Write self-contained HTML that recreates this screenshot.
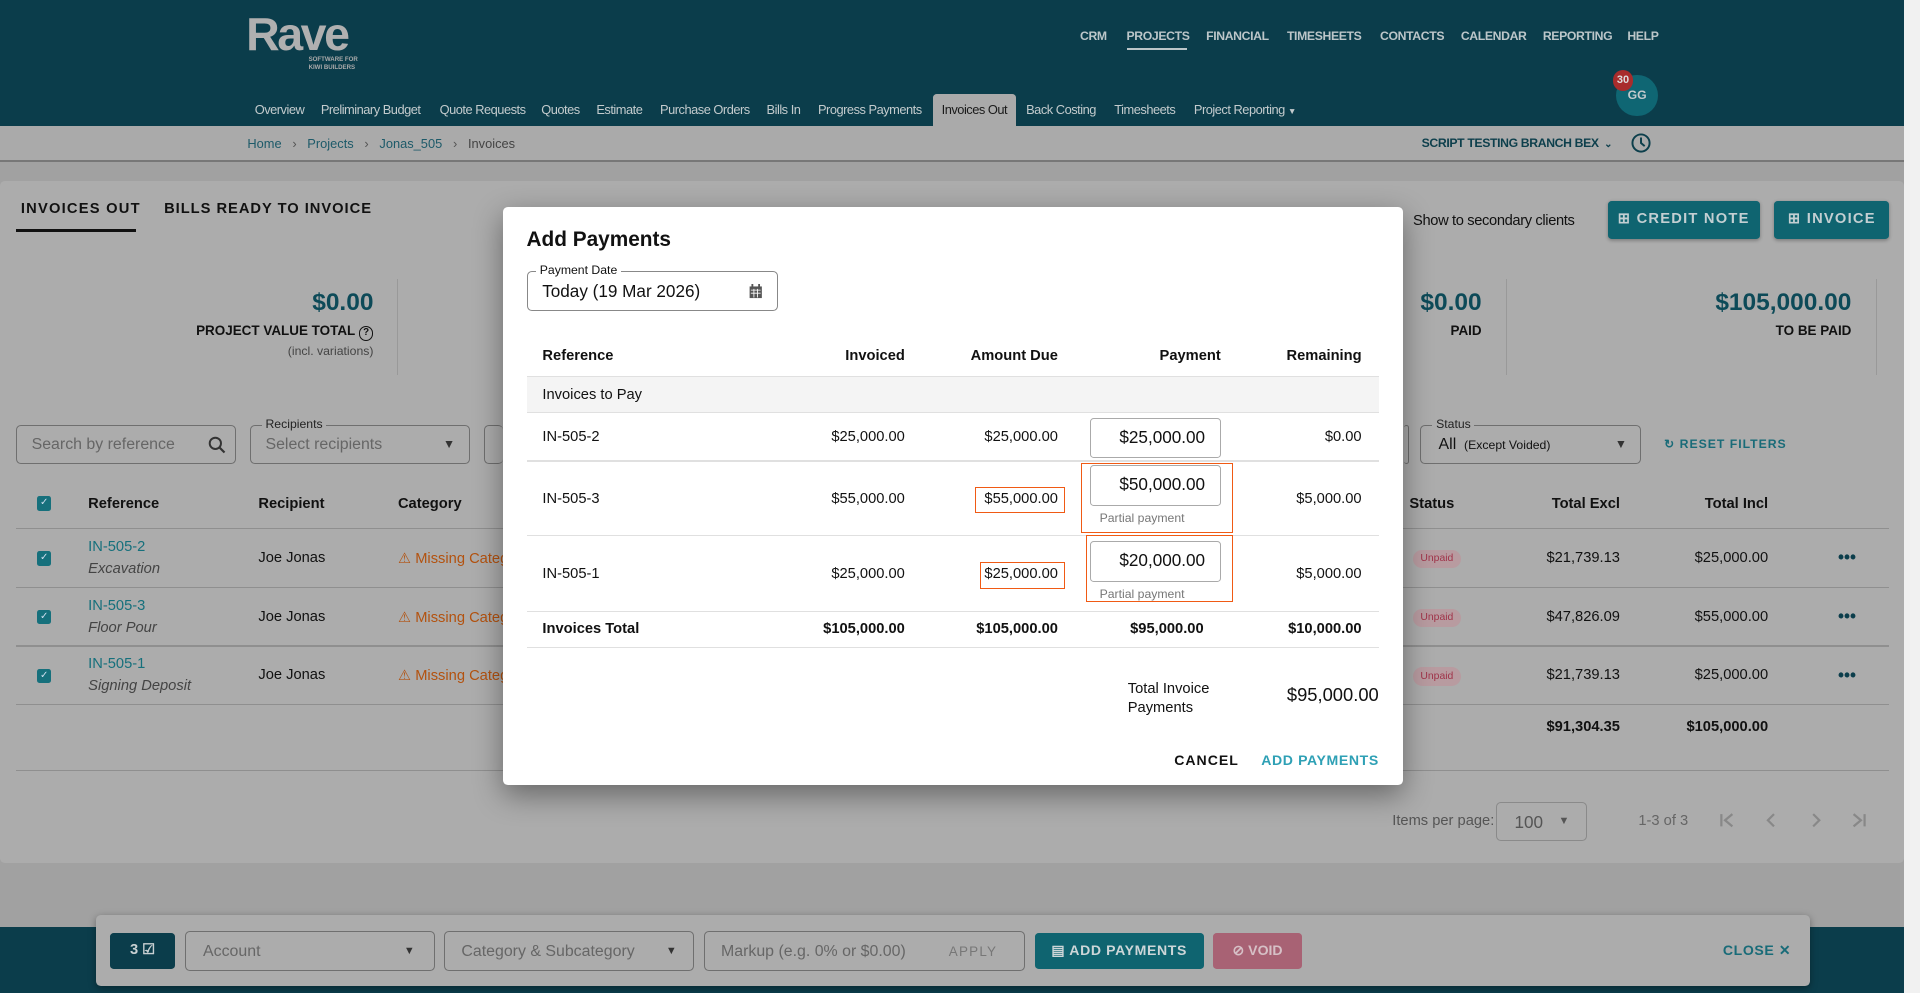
<!DOCTYPE html>
<html><head><meta charset="utf-8"><style>
*{box-sizing:border-box;margin:0;padding:0}
html,body{width:1920px;height:993px;overflow:hidden;background:#a9a9a9}
#w{width:1568px;height:811px;position:relative;zoom:1.22449;font-family:"Liberation Sans",sans-serif;color:#111;background:#a1a1a1;overflow:hidden}
.a{position:absolute;white-space:nowrap}
.hdr{left:0;top:0;width:1555px;height:103px;background:#0b3d4b}
.tn{top:24px;font-size:10px;font-weight:bold;color:#bcc6c9;letter-spacing:-.3px}
.sn{top:83px;font-size:10.5px;color:#c3cbcd;letter-spacing:-.4px}
.r{text-align:right}
.fld{border:1px solid #6f6f6f;border-radius:4px}
.lbl{font-size:10px;background:#acacac;padding:0 3px;top:-7px;left:9px;position:absolute;color:#222}
.th{font-size:12px;font-weight:bold;color:#111}
.mt{font-size:12px;color:#111}
.hl{height:1px;background:#8f8f8f}
.ml{height:1px;background:#e0e0e0}
.ob{border:1.5px solid #f05a14}
.pi{border:1px solid #aaa;border-radius:3px;background:#fff;font-size:14px;text-align:right;padding-right:12px;line-height:31px}
.pill{font-size:8.5px;color:#a0344a;background:#b89ba0;border-radius:9px;padding:3px 6px}
.dots{font-size:14px;font-weight:bold;color:#0b3d4b}
</style></head><body><div id="w">
<div class="a hdr"></div>
<div class="a" style="left:201px;top:6px;font-size:38px;font-weight:bold;color:#b0b0b0;letter-spacing:-2px">Rave</div>
<div class="a" style="left:252px;top:46px;font-size:5px;font-weight:bold;color:#aaa;line-height:6px">SOFTWARE FOR<br>KIWI BUILDERS</div>
<div class="a tn" style="left:882px">CRM</div>
<div class="a tn" style="left:920px">PROJECTS</div>
<div class="a" style="left:920px;top:39px;width:49px;height:2px;background:#bcc6c9"></div>
<div class="a tn" style="left:985px">FINANCIAL</div>
<div class="a tn" style="left:1051px">TIMESHEETS</div>
<div class="a tn" style="left:1127px">CONTACTS</div>
<div class="a tn" style="left:1193px">CALENDAR</div>
<div class="a tn" style="left:1260px">REPORTING</div>
<div class="a tn" style="left:1329px">HELP</div>
<div class="a sn" style="left:208px">Overview</div>
<div class="a sn" style="left:262px">Preliminary Budget</div>
<div class="a sn" style="left:359px">Quote Requests</div>
<div class="a sn" style="left:442px">Quotes</div>
<div class="a sn" style="left:487px">Estimate</div>
<div class="a sn" style="left:539px">Purchase Orders</div>
<div class="a sn" style="left:626px">Bills In</div>
<div class="a sn" style="left:668px">Progress Payments</div>
<div class="a" style="left:762px;top:77px;width:68px;height:27px;background:#aaaaaa;border-radius:3px 3px 0 0"></div>
<div class="a sn" style="left:769px;color:#1a1a1a">Invoices Out</div>
<div class="a sn" style="left:838px">Back Costing</div>
<div class="a sn" style="left:910px">Timesheets</div>
<div class="a sn" style="left:975px">Project Reporting <span style="font-size:7px">▼</span></div>
<div class="a" style="left:1320px;top:61px;width:34px;height:34px;border-radius:50%;background:#0f6673;color:#c3cbcd;font-size:10px;font-weight:bold;text-align:center;line-height:34px">GG</div>
<div class="a" style="left:1317px;top:57px;width:17px;height:17px;border-radius:50%;background:#a82c2c;color:#ddd;font-size:9px;font-weight:bold;text-align:center;line-height:17px">30</div>
<div class="a" style="left:0;top:103px;width:1555px;height:28px;background:#aaaaaa"></div>
<div class="a" style="left:0;top:131px;width:1555px;height:1px;background:#777"></div>
<div class="a" style="left:202px;top:111px;font-size:10.5px;color:#1d5a69">Home &nbsp;&nbsp;<span style="color:#555">›</span>&nbsp;&nbsp; Projects &nbsp;&nbsp;<span style="color:#555">›</span>&nbsp;&nbsp; Jonas_505 &nbsp;&nbsp;<span style="color:#555">›</span>&nbsp;&nbsp; <span style="color:#444">Invoices</span></div>
<div class="a" style="left:1161px;top:111px;font-size:10px;font-weight:bold;color:#0d3f4c;letter-spacing:-.3px">SCRIPT TESTING BRANCH BEX <span style="font-size:8px">&nbsp;⌄</span></div>
<svg class="a" style="left:1331px;top:108px" width="18" height="18" viewBox="0 0 18 18"><circle cx="9" cy="9" r="7" fill="none" stroke="#0d3f4c" stroke-width="1.6"/><path d="M9 4.5V9l3 2.5" fill="none" stroke="#0d3f4c" stroke-width="1.6"/></svg>
<div class="a" style="left:0;top:148px;width:1555px;height:557px;background:#acacac;border-radius:4px"></div>
<div class="a" style="left:1555px;top:0;width:13px;height:811px;background:#f1f1f1"></div>
<div class="a" style="left:17px;top:164px;font-size:12px;font-weight:bold;letter-spacing:1px">INVOICES OUT</div>
<div class="a" style="left:13px;top:187px;width:98px;height:2.5px;background:#111"></div>
<div class="a" style="left:134px;top:164px;font-size:12px;font-weight:bold;letter-spacing:.8px">BILLS READY TO INVOICE</div>
<div class="a r" style="left:100px;width:205px;top:236px;font-size:20px;font-weight:bold;color:#0d4a58">$0.00</div>
<div class="a r" style="left:100px;width:205px;top:264px;font-size:11px;font-weight:bold">PROJECT VALUE TOTAL <span style="display:inline-block;width:12px;height:12px;border:1.2px solid #111;border-radius:50%;font-size:8px;text-align:center;line-height:10px">?</span></div>
<div class="a r" style="left:100px;width:205px;top:281px;font-size:10px;color:#444">(incl. variations)</div>
<div class="a" style="left:324px;top:228px;width:1px;height:78px;background:#999"></div>
<div class="a r" style="left:1010px;width:200px;top:236px;font-size:20px;font-weight:bold;color:#0d4a58">$0.00</div>
<div class="a r" style="left:1010px;width:200px;top:264px;font-size:11px;font-weight:bold">PAID</div>
<div class="a" style="left:1230px;top:228px;width:1px;height:78px;background:#999"></div>
<div class="a r" style="left:1300px;width:212px;top:236px;font-size:20px;font-weight:bold;color:#0d4a58">$105,000.00</div>
<div class="a r" style="left:1300px;width:212px;top:264px;font-size:11px;font-weight:bold">TO BE PAID</div>
<div class="a" style="left:1532px;top:228px;width:1px;height:78px;background:#999"></div>
<div class="a fld" style="left:13px;top:347px;width:180px;height:32px"><span class="a" style="left:12px;top:8px;font-size:13px;color:#666">Search by reference</span>
<svg class="a" style="left:156px;top:8px" width="15" height="15" viewBox="0 0 15 15"><circle cx="6" cy="6" r="4.6" fill="none" stroke="#333" stroke-width="1.6"/><path d="M9.5 9.5l4 4" stroke="#333" stroke-width="1.8"/></svg></div>
<div class="a fld" style="left:204px;top:347px;width:180px;height:32px"><span class="lbl">Recipients</span><span class="a" style="left:12px;top:8px;font-size:13px;color:#666">Select recipients</span><span class="a" style="left:157px;top:9px;font-size:10px;color:#333">▼</span></div>
<div class="a fld" style="left:395px;top:347px;width:16px;height:32px;border-right:none"></div>
<div class="a fld" style="left:1147px;top:347px;width:4px;height:32px;border-left:none"></div>
<div class="a fld" style="left:1160px;top:347px;width:180px;height:32px"><span class="lbl">Status</span><span class="a" style="left:14px;top:8px;font-size:13px">All <span style="font-size:10px">&nbsp;(Except Voided)</span></span><span class="a" style="left:158px;top:9px;font-size:10px;color:#333">▼</span></div>
<div class="a" style="left:1359px;top:357px;font-size:10px;font-weight:bold;color:#196b78;letter-spacing:.8px">↻ RESET FILTERS</div>
<div class="a" style="left:30px;top:405px;width:12px;height:12px;background:#16707c;border-radius:2px;color:#cde;font-size:8px;text-align:center;line-height:12px">✓</div>
<div class="a th" style="left:72px;top:405px">Reference</div>
<div class="a th" style="left:211px;top:405px">Recipient</div>
<div class="a th" style="left:325px;top:405px">Category</div>
<div class="a th" style="left:1151px;top:405px">Status</div>
<div class="a th r" style="left:1250px;width:73px;top:405px">Total Excl</div>
<div class="a th r" style="left:1350px;width:94px;top:405px">Total Incl</div>
<div class="a hl" style="left:13px;top:431px;width:1530px"></div>
<div class="a hl" style="left:13px;top:479px;width:1530px"></div>
<div class="a hl" style="left:13px;top:527px;width:1530px"></div>
<div class="a hl" style="left:13px;top:575px;width:1530px"></div>
<div class="a hl" style="left:13px;top:629px;width:1530px"></div>

<div class="a" style="left:30px;top:450px;width:12px;height:12px;background:#16707c;border-radius:2px;color:#cde;font-size:8px;text-align:center;line-height:12px">✓</div>
<div class="a" style="left:72px;top:440px;font-size:12px;color:#16707c">IN-505-2</div>
<div class="a" style="left:72px;top:458px;font-size:12px;font-style:italic;color:#444">Excavation</div>
<div class="a" style="left:211px;top:449px;font-size:12px">Joe Jonas</div>
<div class="a" style="left:325px;top:449px;font-size:12px;color:#b3520f">⚠ Missing Categ</div>

<div class="a" style="left:30px;top:498px;width:12px;height:12px;background:#16707c;border-radius:2px;color:#cde;font-size:8px;text-align:center;line-height:12px">✓</div>
<div class="a" style="left:72px;top:488px;font-size:12px;color:#16707c">IN-505-3</div>
<div class="a" style="left:72px;top:506px;font-size:12px;font-style:italic;color:#444">Floor Pour</div>
<div class="a" style="left:211px;top:497px;font-size:12px">Joe Jonas</div>
<div class="a" style="left:325px;top:497px;font-size:12px;color:#b3520f">⚠ Missing Categ</div>

<div class="a" style="left:30px;top:546px;width:12px;height:12px;background:#16707c;border-radius:2px;color:#cde;font-size:8px;text-align:center;line-height:12px">✓</div>
<div class="a" style="left:72px;top:536px;font-size:12px;color:#16707c">IN-505-1</div>
<div class="a" style="left:72px;top:554px;font-size:12px;font-style:italic;color:#444">Signing Deposit</div>
<div class="a" style="left:211px;top:545px;font-size:12px">Joe Jonas</div>
<div class="a" style="left:325px;top:545px;font-size:12px;color:#b3520f">⚠ Missing Categ</div>

<div class="a pill" style="left:1154px;top:449px">Unpaid</div>
<div class="a pill" style="left:1154px;top:497px">Unpaid</div>
<div class="a pill" style="left:1154px;top:545px">Unpaid</div>
<div class="a r" style="left:1220px;width:103px;top:449px;font-size:12px">$21,739.13</div>
<div class="a r" style="left:1320px;width:124px;top:449px;font-size:12px">$25,000.00</div>
<div class="a r" style="left:1220px;width:103px;top:497px;font-size:12px">$47,826.09</div>
<div class="a r" style="left:1320px;width:124px;top:497px;font-size:12px">$55,000.00</div>
<div class="a r" style="left:1220px;width:103px;top:545px;font-size:12px">$21,739.13</div>
<div class="a r" style="left:1320px;width:124px;top:545px;font-size:12px">$25,000.00</div>
<div class="a dots" style="left:1501px;top:447px">•••</div>
<div class="a dots" style="left:1501px;top:495px">•••</div>
<div class="a dots" style="left:1501px;top:543px">•••</div>
<div class="a r" style="left:1220px;width:103px;top:587px;font-size:12px;font-weight:bold">$91,304.35</div>
<div class="a r" style="left:1320px;width:124px;top:587px;font-size:12px;font-weight:bold">$105,000.00</div>

<div class="a" style="left:1137px;top:664px;font-size:12px;color:#555">Items per page:</div>
<div class="a fld" style="left:1222px;top:655px;width:74px;height:32px;border-color:#8a8a8a"><span class="a" style="left:14px;top:7px;font-size:14px;color:#555">100</span><span class="a" style="left:50px;top:10px;font-size:9px;color:#555">▼</span></div>
<div class="a" style="left:1338px;top:664px;font-size:12px;color:#666">1-3 of 3</div>
<svg class="a" style="left:1400px;top:660px" width="130" height="20" viewBox="0 0 130 20" fill="none" stroke="#888" stroke-width="1.8"><path d="M6 5v10M15 5l-6 5 6 5" /><path d="M49 5l-5 5 5 5"/><path d="M81 5l5 5-5 5"/><path d="M114 5l6 5-6 5M123 5v10"/></svg>

<div class="a" style="left:0;top:757px;width:1555px;height:54px;background:#0b3d4b"></div>
<div class="a" style="left:78px;top:747px;width:1400px;height:58px;background:#acacac;border-radius:4px;box-shadow:0 2px 6px rgba(0,0,0,.35)"></div>
<div class="a" style="left:90px;top:762px;width:53px;height:29px;background:#0b3d4b;border-radius:3px;color:#c8d0d2;font-size:12px;font-weight:bold;text-align:center;line-height:29px">3 ☑</div>
<div class="a fld" style="left:151px;top:760px;width:204px;height:33px"><span class="a" style="left:14px;top:9px;font-size:13px;color:#666">Account</span><span class="a" style="left:178px;top:11px;font-size:9px;color:#333">▼</span></div>
<div class="a fld" style="left:363px;top:760px;width:204px;height:33px"><span class="a" style="left:13px;top:9px;font-size:13px;color:#666">Category &amp; Subcategory</span><span class="a" style="left:180px;top:11px;font-size:9px;color:#333">▼</span></div>
<div class="a fld" style="left:575px;top:760px;width:262px;height:33px"><span class="a" style="left:13px;top:9px;font-size:13px;color:#666">Markup (e.g. 0% or $0.00)</span><span class="a" style="left:199px;top:10px;font-size:11px;color:#777;letter-spacing:1px">APPLY</span></div>
<div class="a" style="left:845px;top:762px;width:138px;height:29px;background:#0f6470;border-radius:3px;color:#cdd6d8;font-size:11.5px;font-weight:bold;text-align:center;line-height:29px;letter-spacing:.5px">▤ ADD PAYMENTS</div>
<div class="a" style="left:991px;top:762px;width:72px;height:29px;background:#a86274;border-radius:3px;color:#d6c0c6;font-size:11.5px;font-weight:bold;text-align:center;line-height:29px">⊘ VOID</div>
<div class="a" style="left:1407px;top:769px;font-size:11.5px;font-weight:bold;color:#196b78;letter-spacing:.5px">CLOSE ✕</div>

<div class="a" style="left:1154px;top:174px;font-size:12px;color:#111;letter-spacing:-.3px">Show to secondary clients</div>
<div class="a" style="left:1313px;top:164px;width:124px;height:31px;background:#0f6470;border-radius:3px;color:#c3cfd2;font-size:12px;font-weight:bold;letter-spacing:1px;text-align:center;line-height:31px;box-shadow:0 1px 3px rgba(0,0,0,.3)">⊞ CREDIT NOTE</div>
<div class="a" style="left:1449px;top:164px;width:94px;height:31px;background:#0f6470;border-radius:3px;color:#c3cfd2;font-size:12px;font-weight:bold;letter-spacing:1px;text-align:center;line-height:31px;box-shadow:0 1px 3px rgba(0,0,0,.3)">⊞ INVOICE</div>

<div class="a" style="left:411px;top:169px;width:735px;height:472px;background:#fff;border-radius:4px;box-shadow:0 8px 24px rgba(0,0,0,.4)">
<div class="a" style="left:19px;top:17px;font-size:17px;font-weight:bold;color:#111">Add Payments</div>
<div class="a" style="left:19px;top:52px;width:205px;height:33px;border:1px solid #888;border-radius:4px">
<span class="a" style="left:7px;top:-7px;font-size:10px;background:#fff;padding:0 3px">Payment Date</span>
<span class="a" style="left:12px;top:8px;font-size:14px">Today (19 Mar 2026)</span>
<svg class="a" style="left:181px;top:10px" width="11" height="12" viewBox="0 0 11 12"><rect x="0.5" y="2" width="10" height="9.5" fill="#555"/><rect x="2" y="0" width="1.5" height="3" fill="#555"/><rect x="7.5" y="0" width="1.5" height="3" fill="#555"/><path d="M1.5 5h8M1.5 7.5h8M4 4v7M7 4v7" stroke="#fff" stroke-width=".7"/></svg>
</div>
<div class="a th" style="left:32px;top:115px">Reference</div>
<div class="a th r" style="left:228px;width:100px;top:115px">Invoiced</div>
<div class="a th r" style="left:353px;width:100px;top:115px">Amount Due</div>
<div class="a th r" style="left:486px;width:100px;top:115px">Payment</div>
<div class="a th r" style="left:601px;width:100px;top:115px">Remaining</div>
<div class="a" style="left:19px;top:138px;width:696px;height:30px;background:#f4f4f4;border-top:1px solid #e0e0e0;border-bottom:1px solid #e0e0e0"></div>
<div class="a mt" style="left:32px;top:147px">Invoices to Pay</div>

<div class="a mt" style="left:32px;top:181px">IN-505-2</div>
<div class="a mt r" style="left:228px;width:100px;top:181px">$25,000.00</div>
<div class="a mt r" style="left:353px;width:100px;top:181px">$25,000.00</div>
<div class="a pi" style="left:479px;top:172px;width:107px;height:33px">$25,000.00</div>
<div class="a mt r" style="left:601px;width:100px;top:181px">$0.00</div>
<div class="a ml" style="left:19px;top:207px;width:696px"></div>

<div class="a mt" style="left:32px;top:232px">IN-505-3</div>
<div class="a mt r" style="left:228px;width:100px;top:232px">$55,000.00</div>
<div class="a ob" style="left:385px;top:229px;width:74px;height:21px"></div>
<div class="a mt r" style="left:353px;width:100px;top:232px">$55,000.00</div>
<div class="a ob" style="left:472px;top:209px;width:124px;height:57px"></div>
<div class="a pi" style="left:479px;top:211px;width:107px;height:33px">$50,000.00</div>
<div class="a" style="left:487px;top:248px;font-size:10px;color:#777">Partial payment</div>
<div class="a mt r" style="left:601px;width:100px;top:232px">$5,000.00</div>
<div class="a ml" style="left:19px;top:268px;width:696px"></div>

<div class="a mt" style="left:32px;top:293px">IN-505-1</div>
<div class="a mt r" style="left:228px;width:100px;top:293px">$25,000.00</div>
<div class="a ob" style="left:389px;top:290px;width:70px;height:22px"></div>
<div class="a mt r" style="left:353px;width:100px;top:293px">$25,000.00</div>
<div class="a ob" style="left:476px;top:268px;width:120px;height:55px"></div>
<div class="a pi" style="left:479px;top:273px;width:107px;height:33px">$20,000.00</div>
<div class="a" style="left:487px;top:310px;font-size:10px;color:#777">Partial payment</div>
<div class="a mt r" style="left:601px;width:100px;top:293px">$5,000.00</div>
<div class="a ml" style="left:19px;top:330px;width:696px"></div>

<div class="a mt" style="left:32px;top:338px;font-weight:bold">Invoices Total</div>
<div class="a mt r" style="left:228px;width:100px;top:338px;font-weight:bold">$105,000.00</div>
<div class="a mt r" style="left:353px;width:100px;top:338px;font-weight:bold">$105,000.00</div>
<div class="a mt r" style="left:472px;width:100px;top:338px;font-weight:bold">$95,000.00</div>
<div class="a mt r" style="left:601px;width:100px;top:338px;font-weight:bold">$10,000.00</div>
<div class="a ml" style="left:19px;top:359px;width:696px"></div>
<div class="a" style="left:510px;top:386px;font-size:12px;line-height:16px">Total Invoice<br>Payments</div>
<div class="a r" style="left:600px;width:115px;top:390px;font-size:15px">$95,000.00</div>
<div class="a" style="left:548px;top:445px;font-size:11.5px;font-weight:bold;letter-spacing:.8px">CANCEL</div>
<div class="a" style="left:619px;top:445px;font-size:11.5px;font-weight:bold;letter-spacing:.5px;color:#2ea0b5">ADD PAYMENTS</div>
</div>
</div></body></html>
